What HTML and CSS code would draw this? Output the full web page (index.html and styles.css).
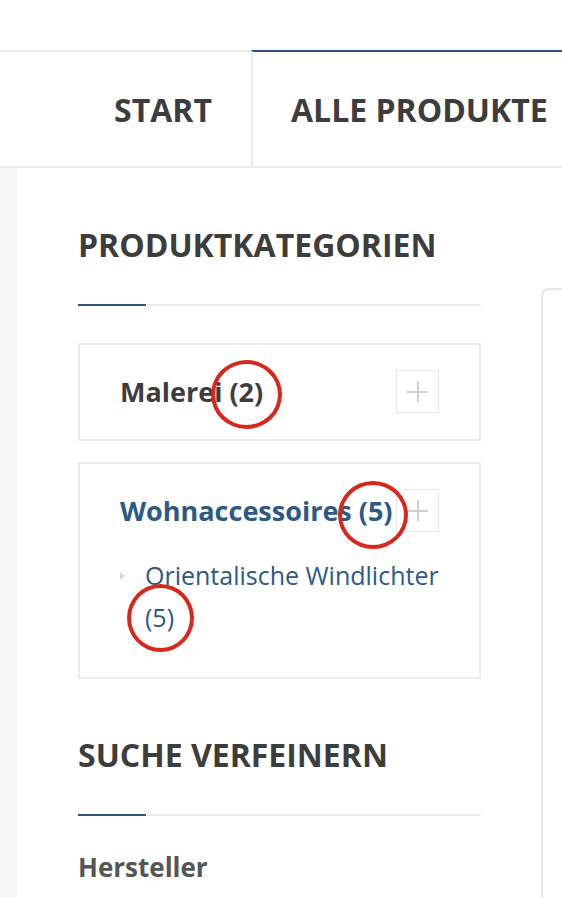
FILE: index.html
```html
<!DOCTYPE html>
<html lang="de">
<head>
<meta charset="utf-8">
<title>Produktkategorien</title>
<link rel="stylesheet" href="styles.css">
</head>
<body>
<div class="page">
  <nav class="nav">
    <a class="nav-item nav-start" href="#">START</a>
    <a class="nav-item nav-active" href="#">ALLE PRODUKTE</a>
  </nav>
  <div class="main">
    <div class="stripe"></div>
    <aside class="sidebar">
      <h2 class="block-title">PRODUKTKATEGORIEN</h2>
      <div class="title-rule"></div>
      <div class="cat-box">
        <div class="cat-row">
          <a class="cat-name" href="#">Malerei (2)</a>
          <span class="plus"></span>
        </div>
      </div>
      <div class="cat-box">
        <div class="cat-row">
          <a class="cat-name cat-active" href="#">Wohnaccessoires (5)</a>
          <span class="plus"></span>
        </div>
        <ul class="sub-list">
          <li class="sub-item"><a href="#">Orientalische Windlichter (5)</a></li>
        </ul>
      </div>
      <h2 class="block-title block-title-2">SUCHE VERFEINERN</h2>
      <div class="title-rule"></div>
      <div class="filter-name">Hersteller</div>
    </aside>
    <section class="content"></section>
  </div>
  <span class="mark mark-1"></span>
  <span class="mark mark-2"></span>
  <span class="mark mark-3"></span>
</div>
</body>
</html>
```

FILE: styles.css
```css
html, body {
  margin: 0;
  padding: 0;
  background: #fff;
}
body {
  font-family: "Open Sans", "Noto Sans", sans-serif;
  color: #3d3d3d;
  overflow: hidden;
}
.page {
  position: relative;
  width: 562px;
  height: 900px;
  overflow: hidden;
}
a {
  text-decoration: none;
  color: inherit;
}

/* navigation */
.nav {
  display: flex;
  margin-top: 50px;
  height: 116px;
  border-bottom: 2px solid #ebebeb;
}
.nav-item {
  display: flex;
  align-items: center;
  font-size: 32px;
  font-weight: 700;
  color: #3d3d3d;
  white-space: nowrap;
  border-top: 2px solid #ebebeb;
}
.nav-start {
  width: 212px;
  flex: none;
  justify-content: flex-end;
  padding-right: 39px;
}
.nav-active {
  flex: 1 0 auto;
  border-top-color: #2c5378;
  border-left: 2px solid #ebebeb;
  padding-left: 38px;
}

/* main area */
.main {
  display: flex;
  height: 730px;
}
.stripe {
  width: 17px;
  flex: none;
  background: #f7f7f7;
}
.sidebar {
  width: 403px;
  flex: none;
  padding-left: 61px;
}
.block-title {
  margin: 58px 0 0;
  font-size: 32px;
  line-height: 38px;
  font-weight: 700;
  color: #3d3d3d;
}
.block-title-2 {
  margin-top: 57px;
}
.title-rule {
  margin-top: 40px;
  height: 2px;
  background: linear-gradient(to right, #2c5378 0, #2c5378 68px, #ebebeb 68px);
}
.cat-box {
  margin-top: 37px;
  border: 2px solid #ebebeb;
  padding: 25px 40px 26px;
}
.cat-box + .cat-box {
  margin-top: 21px;
}
.cat-row {
  display: flex;
  align-items: center;
  justify-content: space-between;
}
.cat-name {
  font-size: 27px;
  font-weight: 700;
  color: #3d3d3d;
}
.cat-active {
  color: #2c5a82;
}
.plus {
  position: relative;
  width: 41px;
  height: 41px;
  border: 1px solid #e8e8e8;
  flex: none;
}
.plus::before,
.plus::after {
  content: "";
  position: absolute;
  background: #cfcfcf;
}
.plus::before {
  left: 10px;
  right: 10px;
  top: 20px;
  height: 2px;
}
.plus::after {
  top: 10px;
  bottom: 10px;
  left: 20px;
  width: 2px;
}
.sub-list {
  list-style: none;
  margin: 22px 0 13px;
  padding: 0;
}
.sub-item {
  position: relative;
  padding-left: 25px;
  font-size: 25px;
  line-height: 42px;
  color: #2c5a82;
}
.sub-item::before {
  content: "";
  position: absolute;
  left: 0;
  top: 18px;
  border-left: 5px solid #d6d6d6;
  border-top: 4px solid transparent;
  border-bottom: 4px solid transparent;
}
.filter-name {
  margin-top: 33px;
  font-size: 26px;
  line-height: 36px;
  font-weight: 700;
  color: #555;
}
.content {
  flex: 1;
  margin-left: 60px;
  margin-top: 120px;
  border-left: 2px solid #e6e6e6;
  border-top: 2px solid #e6e6e6;
  border-top-left-radius: 8px;
}

/* red annotation circles */
.mark {
  position: absolute;
  border: 4px solid #d8271c;
  border-radius: 50%;
  box-sizing: border-box;
}
.mark-1 { left: 211px; top: 360px; width: 71px; height: 69px; }
.mark-2 { left: 338px; top: 481px; width: 70px; height: 68px; }
.mark-3 { left: 127px; top: 584px; width: 67px; height: 68px; }
```
